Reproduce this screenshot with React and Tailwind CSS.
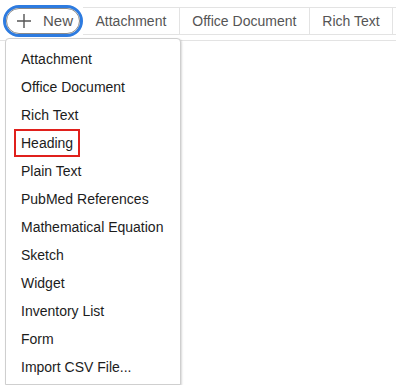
import React from 'react';

const items = [
  'Attachment',
  'Office Document',
  'Rich Text',
  'Heading',
  'Plain Text',
  'PubMed References',
  'Mathematical Equation',
  'Sketch',
  'Widget',
  'Inventory List',
  'Form',
  'Import CSV File...',
];

const tabs = ['Attachment', 'Office Document', 'Rich Text'];

export default function App() {
  return (
    <div className="relative h-[385px] w-[396px] overflow-hidden bg-white font-['Liberation_Sans',Arial,sans-serif] text-[14px]">
      {/* Toolbar */}
      <div className="flex h-[41px] items-start border-b border-[#e3e3e3]">
        <div className="pl-[3px] pt-[5px]">
          <div className="rounded-full border-[3px] border-[#2d7be0]">
            <button className="flex h-[26px] w-[74px] items-center gap-[11px] rounded-full border border-[#8a8a8a] pl-[9px] text-[#555]">
              <svg width="16" height="16" viewBox="0 0 16 16" fill="none" stroke="#555" strokeWidth="1.4">
                <path d="M8 1v14M1 8h14" />
              </svg>
              <span className="text-[15px]">New</span>
            </button>
          </div>
        </div>
        <div className="mt-[7px] flex h-[28px] flex-1 border-y border-[#e3e3e3]">
          {tabs.map((t) => (
            <div
              key={t}
              className="flex items-center whitespace-nowrap border-r border-[#e3e3e3] px-[12.5px] text-[#555]"
            >
              {t}
            </div>
          ))}
        </div>
      </div>

      {/* Dropdown menu */}
      <div className="absolute left-[5px] top-[38px] w-[176px] rounded-t-[4px] border border-[#cfcfcf] bg-white pb-[3px] pt-[6px] shadow-[1px_1px_2px_rgba(0,0,0,0.15)]">
        {items.map((it) => (
          <div key={it} className="flex h-[28px] items-center px-[8px] text-[#1c1c1c]">
            {it === 'Heading' ? (
              <span className="flex h-[28px] items-center border-2 border-[#e0201c] px-[5px]">{it}</span>
            ) : (
              <span className="pl-[7px]">{it}</span>
            )}
          </div>
        ))}
      </div>
    </div>
  );
}
